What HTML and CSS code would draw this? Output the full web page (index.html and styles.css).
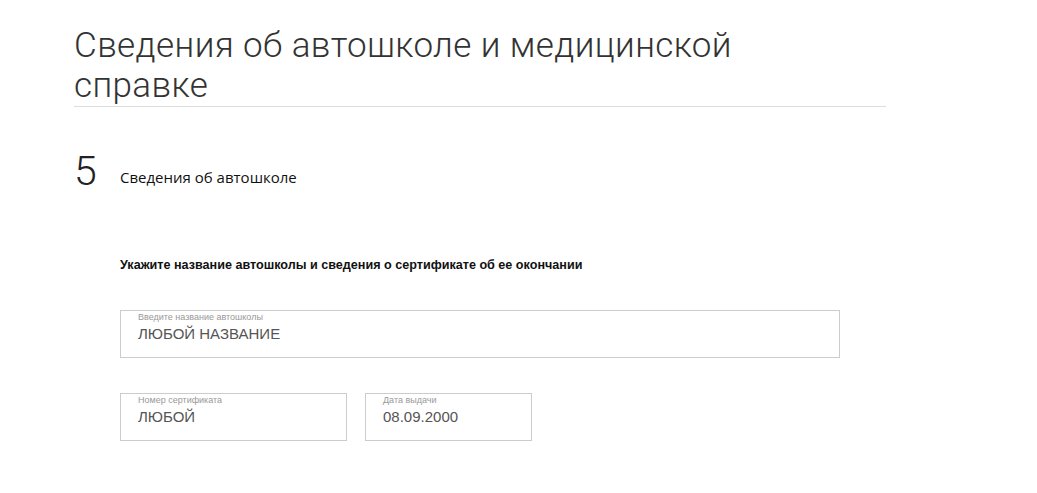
FILE: index.html
```html
<!DOCTYPE html>
<html lang="ru">
<head>
    <meta charset="UTF-8">
    <meta name="viewport" content="width=device-width, initial-scale=1.0">
    <title>Сведения об автошколе</title>
    <link rel="stylesheet" href="styles.css">
</head>
<body>

<div class="page">
    <h1 class="page-title">Сведения об автошколе и медицинской справке</h1>

    <div class="step">
        <span class="step-num">5</span>
        <span class="step-name">Сведения об автошколе</span>
    </div>

    <div class="form">
        <p class="form-hint">Укажите название автошколы и сведения о сертификате об ее окончании</p>

        <div class="field field-wide">
            <label class="field-label">Введите название автошколы</label>
            <div class="field-value">ЛЮБОЙ НАЗВАНИЕ</div>
        </div>

        <div class="row">
            <div class="field field-cert">
                <label class="field-label">Номер сертификата</label>
                <div class="field-value">ЛЮБОЙ</div>
            </div>
            <div class="field field-date">
                <label class="field-label">Дата выдачи</label>
                <div class="field-value">08.09.2000</div>
            </div>
        </div>
    </div>
</div>

</body>
</html>
```

FILE: styles.css
```css
body {
    margin: 0;
    background: #fff;
    font-family: "Liberation Sans", Arial, sans-serif;
    color: #222;
}
.page {
    padding: 26px 0 0 74px;
    width: 812px;
}
.page-title {
    margin: 0;
    font-family: Roboto, sans-serif;
    font-weight: 300;
    font-size: 35px;
    line-height: 40px;
    letter-spacing: 0.4px;
    color: #333;
    border-bottom: 1px solid #ddd;
    padding-right: 120px;
}
.step {
    display: flex;
    align-items: flex-start;
    margin-top: 40px;
}
.step-num {
    font-family: Roboto, sans-serif;
    font-weight: 300;
    font-size: 41px;
    line-height: 48px;
    width: 46px;
    color: #222;
}
.step-name {
    margin-top: 20px;
    font-family: "Open Sans", sans-serif;
    font-size: 15px;
    line-height: 20px;
    color: #111;
}
.form {
    padding-left: 46px;
    margin-top: 62px;
}
.form-hint {
    margin: 0 0 37px;
    font-size: 12.6px;
    line-height: 16px;
    font-weight: bold;
    color: #111;
}
.field {
    box-sizing: border-box;
    height: 48px;
    border: 1px solid #ccc;
    padding: 1px 0 0 17px;
}
.field-wide {
    width: 720px;
}
.row {
    display: flex;
    gap: 18px;
    margin-top: 35px;
}
.field-cert {
    width: 227px;
}
.field-date {
    width: 167px;
}
.field-label {
    display: block;
    font-size: 9px;
    line-height: 11px;
    color: #999;
}
.field-value {
    font-size: 15px;
    line-height: 22px;
    color: #555;
}
```
